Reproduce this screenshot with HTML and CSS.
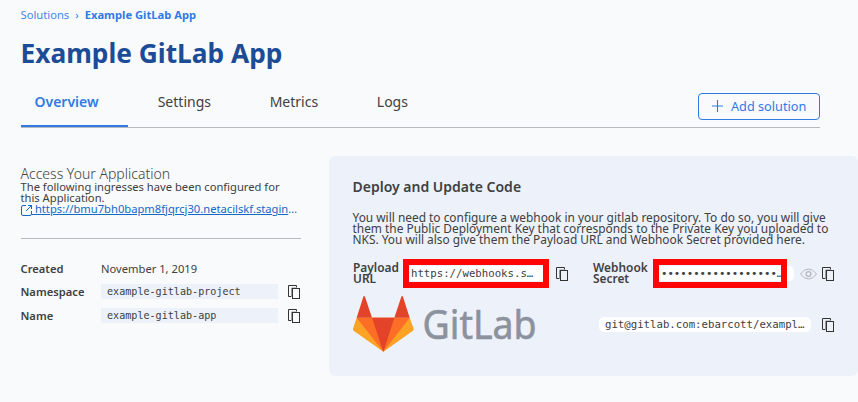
FILE: index.html
```html
<!DOCTYPE html>
<html lang="en">
<head>
<meta charset="utf-8">
<title>Example GitLab App</title>
<link rel="stylesheet" href="styles.css">
</head>
<body>
<svg class="defs" width="0" height="0">
  <symbol id="copy" viewBox="0 0 12 14">
    <path d="M3.2 11.5H.5V.5h8v2" fill="none" stroke="#333"/>
    <path d="M3.5 12V3h5" fill="none" stroke="#999"/>
    <rect x="4.5" y="3.5" width="7" height="10" fill="none" stroke="#333"/>
  </symbol>
</svg>
<header class="header">
  <nav class="crumbs"><a>Solutions</a><span class="sep">›</span><b>Example GitLab App</b></nav>
  <h1 class="title">Example GitLab App</h1>
  <div class="bar">
    <nav class="tabs">
      <a class="tab active">Overview</a><a class="tab settings">Settings</a><a class="tab metrics">Metrics</a><a class="tab">Logs</a>
    </nav>
    <button class="add"><svg width="11" height="12" viewBox="0 0 11 12"><path d="M5.5 0v12M0 6h11" stroke="#2f7ae5" stroke-width="1.1"/></svg><span>Add solution</span></button>
  </div>
</header>
<main class="main">
  <section class="info">
    <h2 class="access">Access Your Application</h2>
    <p class="ingress">The following ingresses have been configured for<br>this Application.</p>
    <div class="linkrow">
      <svg width="12" height="11" viewBox="0 0 12 11"><path d="M5 .5H2Q.5.5.5 2v7Q.5 10.500 2 10.500h7Q10.500 10.500 10.500 9V6M7 .5h3.500V4M10.500.5 5 6" fill="none" stroke="#1469c7"/></svg>
      <div class="clip"><a>&nbsp;https://bmu7bh0bapm8fjqrcj30.netacilskf.staging.netapp.io</a></div>
    </div>
    <dl class="facts">
      <dt>Created</dt><dd class="date">November 1, 2019</dd><span></span>
      <dt>Namespace</dt><dd class="code">example-gitlab-project</dd><svg class="copy"><use href="#copy"/></svg>
      <dt>Name</dt><dd class="code">example-gitlab-app</dd><svg class="copy"><use href="#copy"/></svg>
    </dl>
  </section>
  <section class="panel">
    <h2 class="deploy">Deploy and Update Code</h2>
    <p class="text">You will need to configure a webhook in your gitlab repository. To do so, you will give<br>them the Public Deployment Key that corresponds to the Private Key you uploaded to<br>NKS. You will also give them the Payload URL and Webhook Secret provided here.</p>
    <div class="fields">
      <div class="field payload">
        <label>Payload<br>URL</label>
        <div class="value"><div class="pill">https://webhooks.staging.netapp.io</div><i class="mark"></i></div>
        <svg class="copy"><use href="#copy"/></svg>
      </div>
      <div class="field secret">
        <label>Webhook<br>Secret</label>
        <div class="value"><div class="pill">••••••••••••••••••…</div><i class="mark"></i></div>
        <svg class="eye" viewBox="0 0 17 12"><path d="M.5 6Q4 1 8.500 1T16.500 6Q13 11 8.500 11T.5 6Z" fill="none" stroke="#b5b5b8"/><circle cx="8.500" cy="6" r="2.400" fill="none" stroke="#b5b5b8" stroke-width="1.300"/></svg>
        <svg class="copy"><use href="#copy"/></svg>
      </div>
    </div>
    <div class="repo">
      <svg class="logo" width="190" height="58" viewBox="0 0 190 58">
        <g transform="scale(.33333) translate(-69 -138)">
          <path fill="#fca326" d="M80 203 69 236q-1 4 2 6l89 63 89-63q3-2 2-6l-12-33z"/>
          <path fill="#fc6d26" d="M80 203H239L160 305z"/>
          <path fill="#e24329" d="M126 203h67L160 305zM80 203l20-63q2-4 5 0l21 63zM193 203l21-63q3-4 5 0l20 63z"/>
        </g>
        <text x="69.500" y="42.500" textLength="114" lengthAdjust="spacingAndGlyphs">GitLab</text>
      </svg>
      <div class="pill git">git@gitlab.com:ebarcott/example-gitlab.git</div>
      <svg class="copy"><use href="#copy"/></svg>
    </div>
  </section>
</main>
</body>
</html>
```
FILE: styles.css
```css
* { box-sizing: border-box; }
body { margin: 0; width: 858px; height: 402px; overflow: hidden; background: #f8fafc; color: #404040; font: 11.2px "Noto Sans", sans-serif; }
h1, h2, p, dl, dd { margin: 0; }
svg { display: block; flex: none; }
.defs { display: none; }
.header { padding: 0 38px 0 21px; }
.crumbs { height: 30px; margin-left: -.5px; line-height: 30px; color: #2f7ae5; }
.crumbs a { opacity: .9; }
.sep { margin: 0 6px; }
.title { height: 45px; margin-left: -.5px; line-height: 46px; font-size: 26.3px; font-weight: 700; color: #1c4c96; white-space: nowrap; }
.bar { display: flex; justify-content: space-between; height: 53px; border-bottom: 1px solid #b8b8be; }
.tabs { display: flex; gap: 29.7px; font-size: 14px; line-height: 53px; }
.tab { height: 52px; padding-right: 29px; }
.tab.active { width: 107px; padding-left: 13.5px; color: #2f7ae5; font-weight: 600; border-bottom: 2px solid #2f7ae5; }
.add { display: flex; align-items: center; gap: 8px; width: 122px; height: 27px; margin-top: 18px; padding: 0 0 1px 13px; border: 1px solid #2f7ae5; border-radius: 4px; background: transparent; color: #2f7ae5; font: 12.7px "Noto Sans", sans-serif; white-space: nowrap; }
.main { display: flex; justify-content: space-between; padding: 28px 0 0 21px; }
.info { width: 280px; padding-top: 8px; }
.access { height: 17px; margin-left: -.5px; line-height: 20px; font-size: 14px; font-weight: 300; }
.ingress { margin-left: -.5px; line-height: 11px; white-space: nowrap; }
.linkrow { display: flex; height: 12px; margin-top: 1px; color: #1469c7; }
.linkrow svg { margin-top: 1px; }
.clip { width: 267px; height: 14px; margin: -1px 0 0 -1px; line-height: 11px; white-space: nowrap; overflow: hidden; text-overflow: ellipsis; }
.clip a { text-decoration: underline; }
.facts { display: grid; grid-template-columns: 80px 177px 12px; grid-template-rows: 22px 25px 23px; align-items: center; margin-top: 22px; padding-top: 18px; border-top: 1px solid #b8b8be; }
.facts dt { margin-left: -.5px; font-weight: 600; line-height: 15px; }
.facts .copy { margin: 0 0 0 10px; }
.code { height: 15px; line-height: 15px; padding-left: 6px; background: #ecf1fa; font-family: "DejaVu Sans Mono", monospace; font-size: 10.1px; }
.copy { width: 12px; height: 14px; }
.panel { width: 529px; height: 220px; padding: 20px 24px 0; border-radius: 6px; background: #ecf1fa; }
.deploy { height: 22px; margin-left: -.5px; line-height: 22px; font-size: 14px; font-weight: 600; }
.text { margin: 14px 0 0 -.5px; font-size: 11.9px; line-height: 11px; white-space: nowrap; }
.fields { display: flex; height: 29px; margin-top: 14px; }
.field { display: flex; flex: none; align-items: center; width: 240px; }
.field label { flex: none; width: 50px; margin-top: -2px; font-size: 11.9px; line-height: 11px; font-weight: 600; }
.value { position: relative; flex: none; width: 146px; }
.secret { width: 242px; }
.secret label { width: 60px; }
.secret .value { width: 141px; }
.mark { position: absolute; top: -7px; left: 0; width: 146px; height: 29px; border: 6px solid #ff0505; }
.secret .mark { width: 134px; }
.pill { height: 15px; line-height: 15px; padding: 0 6px; border-radius: 5px; background: #fff; font-family: "DejaVu Sans Mono", monospace; font-size: 10.7px; white-space: nowrap; overflow: hidden; text-overflow: ellipsis; }
.value .pill { padding: 0 11px 0 8px; }
.secret .value .pill { padding-right: 8px; }
.payload .copy { margin-left: 7px; }
.eye { width: 17px; height: 12px; margin: 0 5px 0 6px; }
.repo { display: flex; margin-top: 8px; }
.logo { width: 190px; height: 58px; }
.logo text { fill: #8c929d; stroke: #8c929d; stroke-width: .6px; font: 40px "Noto Sans", sans-serif; }
.git { width: 212px; margin: 21px 11px 0 56px; }
.repo .copy { margin-top: 22px; }
```
